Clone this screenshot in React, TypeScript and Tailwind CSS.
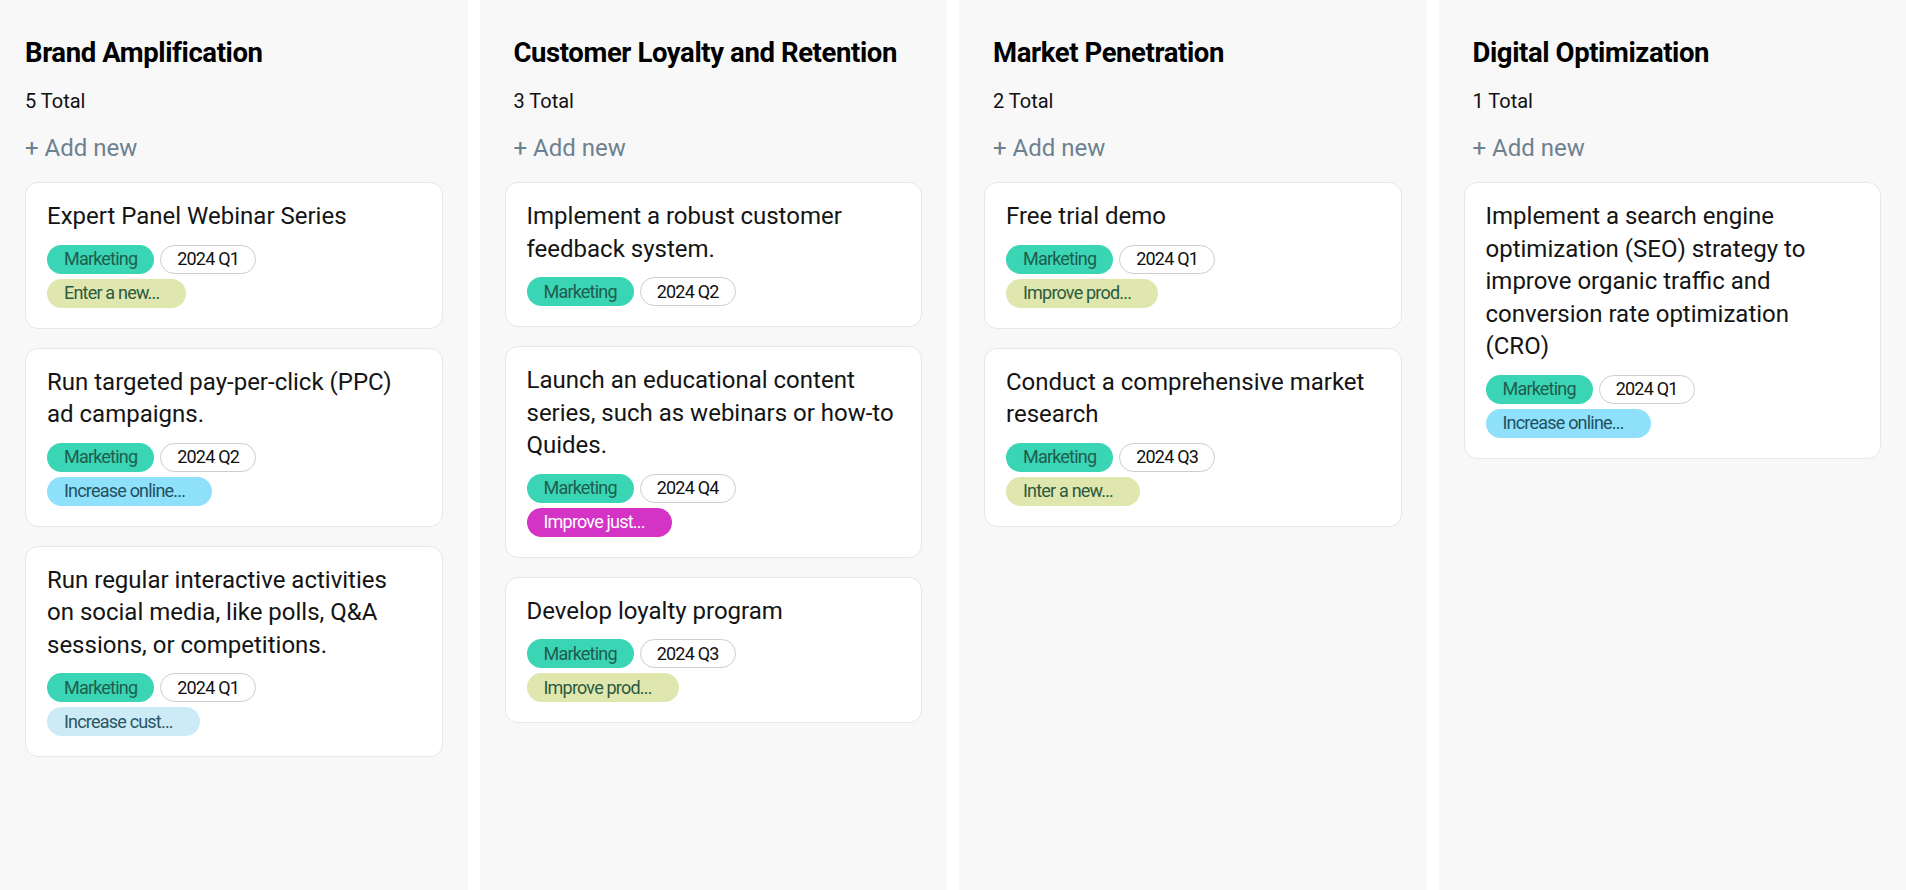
import React from "react";

type Goal = { label: string; tone: "olive" | "blue" | "sky" | "magenta" };

type Card = {
  title: string;
  quarter: string;
  goal?: Goal;
};

type Column = {
  name: string;
  total: number;
  cards: Card[];
  indent: boolean;
};

const columns: Column[] = [
  {
    name: "Brand Amplification",
    total: 5,
    indent: false,
    cards: [
      {
        title: "Expert Panel Webinar Series",
        quarter: "2024 Q1",
        goal: { label: "Enter a new...", tone: "olive" },
      },
      {
        title: "Run targeted pay-per-click (PPC) ad campaigns.",
        quarter: "2024 Q2",
        goal: { label: "Increase online...", tone: "blue" },
      },
      {
        title:
          "Run regular interactive activities on social media, like polls, Q&A sessions, or competitions.",
        quarter: "2024 Q1",
        goal: { label: "Increase cust...", tone: "sky" },
      },
    ],
  },
  {
    name: "Customer Loyalty and Retention",
    total: 3,
    indent: true,
    cards: [
      {
        title: "Implement a robust customer feedback system.",
        quarter: "2024 Q2",
      },
      {
        title:
          "Launch an educational content series, such as webinars or how-to Quides.",
        quarter: "2024 Q4",
        goal: { label: "Improve just...", tone: "magenta" },
      },
      {
        title: "Develop loyalty program",
        quarter: "2024 Q3",
        goal: { label: "Improve prod...", tone: "olive" },
      },
    ],
  },
  {
    name: "Market Penetration",
    total: 2,
    indent: true,
    cards: [
      {
        title: "Free trial demo",
        quarter: "2024 Q1",
        goal: { label: "Improve prod...", tone: "olive" },
      },
      {
        title: "Conduct a comprehensive market research",
        quarter: "2024 Q3",
        goal: { label: "Inter a new...", tone: "olive" },
      },
    ],
  },
  {
    name: "Digital Optimization",
    total: 1,
    indent: true,
    cards: [
      {
        title:
          "Implement a search engine optimization (SEO) strategy to improve organic traffic and conversion rate optimization (CRO)",
        quarter: "2024 Q1",
        goal: { label: "Increase online...", tone: "blue" },
      },
    ],
  },
];

const toneClass: Record<Goal["tone"], string> = {
  olive: "bg-[#dfe6ae] text-[#2b5a40]",
  blue: "bg-[#8fe1fb] text-[#22505f]",
  sky: "bg-[#cdebf7] text-[#2a5664]",
  magenta: "bg-[#d433c6] text-white",
};

const pill =
  "h-[29px] rounded-full flex items-center text-[18px] tracking-[-0.8px] leading-none whitespace-nowrap";

const TaskCard: React.FC<{ card: Card }> = ({ card }) => (
  <div className="bg-white border border-[#e7e7e7] rounded-[13px] pt-[17px] pb-[20px] pl-[21px] pr-[21px]">
    <p className="text-[24px] leading-[32.5px] text-[#141414] max-w-[368px]">
      {card.title}
    </p>
    <div className="mt-[12px] flex flex-col gap-[5px]">
      <div className="flex gap-[6px]">
        <span className={`${pill} px-[17px] bg-[#3ad5b5] text-[#1f5d4e]`}>
          Marketing
        </span>
        <span
          className={`${pill} px-[16px] border-[1.5px] border-[#cdcdcd] text-[#111]`}
        >
          {card.quarter}
        </span>
      </div>
      {card.goal && (
        <div className="flex">
          <span
            className={`${pill} pl-[17px] pr-[27px] ${toneClass[card.goal.tone]}`}
          >
            {card.goal.label}
          </span>
        </div>
      )}
    </div>
  </div>
);

export default function App() {
  return (
    <div
      className="w-[1906px] h-[890px] bg-white grid grid-cols-4 gap-3 overflow-hidden"
      style={{ fontFamily: "Roboto, 'Liberation Sans', sans-serif" }}
    >
      {columns.map((col) => (
        <div key={col.name} className="bg-[#f8f8f8] h-full px-[25px] pt-[35px]">
          <div className={col.indent ? "pl-[9px]" : ""}>
            <h2 className="text-[27.5px] leading-[36px] font-bold text-black tracking-[-0.4px]">
              {col.name}
            </h2>
            <div className="mt-[16px] text-[20px] leading-[28px] text-[#111]">
              {col.total} Total
            </div>
            <div className="mt-[17px] text-[24px] leading-[32px] text-[#6d8190]">
              + Add new
            </div>
          </div>
          <div className="mt-[18px] flex flex-col gap-[19px]">
            {col.cards.map((card) => (
              <TaskCard key={card.title} card={card} />
            ))}
          </div>
        </div>
      ))}
    </div>
  );
}
